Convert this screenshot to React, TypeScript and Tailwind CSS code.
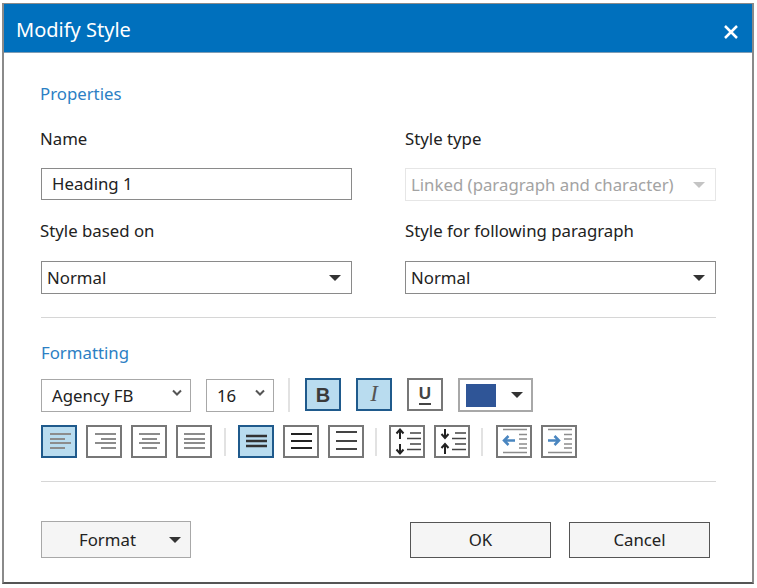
import type { ReactNode } from "react";

function Caret({ color = "#333" }: { color?: string }) {
  return (
    <svg width="14" height="8" viewBox="0 0 14 8" className="shrink-0">
      <path d="M1 1h12L7 7z" fill={color} />
    </svg>
  );
}

function Chevron() {
  return (
    <svg width="12" height="8" viewBox="0 0 12 8" className="shrink-0 -mt-[5px]">
      <path d="M2 1.5 6 5.5 10 1.5" fill="none" stroke="#555" strokeWidth="2" />
    </svg>
  );
}

function Select({ value }: { value: string }) {
  return (
    <div className="h-[33px] border border-[#8a8a8a] bg-white pl-[5px] pr-[9px] flex items-center justify-between text-[16.8px] text-[#222]">
      <span>{value}</span>
      <Caret />
    </div>
  );
}

function ToolButton({ active, children }: { active?: boolean; children: ReactNode }) {
  return (
    <button
      className={
        active
          ? "w-[36px] h-[33px] border-2 border-[#1f5a8c] bg-[#b9dcef] flex items-center justify-center"
          : "w-[36px] h-[33px] border-2 border-[#777777] bg-white flex items-center justify-center"
      }
    >
      {children}
    </button>
  );
}

function Lines({ lines, color = "#8c8c8c", width = 2 }: { lines: [number, number, number][]; color?: string; width?: number }) {
  return (
    <svg width="32" height="29" viewBox="0 0 32 29">
      {lines.map(([y, x1, x2]) => (
        <line key={y} x1={x1} x2={x2} y1={y} y2={y} stroke={color} strokeWidth={width} />
      ))}
    </svg>
  );
}

function Sep({ tall }: { tall?: boolean }) {
  return <div className={tall ? "w-[2px] h-[34px] bg-[#e2e2e2]" : "w-[2px] h-[28px] bg-[#e2e2e2]"} />;
}

function SpacingIcon({ flip }: { flip?: boolean }) {
  return (
    <svg width="32" height="29" viewBox="0 0 32 29">
      {flip ? (
        <path d="M9 2v8M5.5 7 9 11l3.5-4M9 27v-9M5.5 21 9 17l3.5 4" fill="none" stroke="#222" strokeWidth="2" />
      ) : (
        <path d="M9 12V3M5.5 6.5 9 2.500l3.500 4M9 17v9M5.500 22.500 9 26.500l3.500-4" fill="none" stroke="#222" strokeWidth="2" />
      )}
      <path d="M19 6h11M16 11.500h14M19 17h11M16 22.500h14" fill="none" stroke="#444" strokeWidth="1.500" />
    </svg>
  );
}

function IndentIcon({ right }: { right?: boolean }) {
  return (
    <svg width="32" height="29" viewBox="0 0 32 29">
      <path d="M5 2.500h24M5 25.500h24M21 7.500h8M21 12h8M21 17h8M21 21h8" fill="none" stroke="#8c8c8c" strokeWidth="1.500" />
      {right ? (
        <path d="M5 13.500h11M11.500 9l4.500 4.500-4.500 4.500" fill="none" stroke="#4a86c0" strokeWidth="2.500" />
      ) : (
        <path d="M17 13.500H6M10.500 9 6 13.500l4.500 4.500" fill="none" stroke="#4a86c0" strokeWidth="2.500" />
      )}
    </svg>
  );
}

export default function App() {
  return (
    <div className="w-[757px] h-[588px] bg-white pl-[2px] pt-[3px] font-['Noto_Sans',sans-serif]">
      <div className="w-[752px] h-[581px] border-x-2 border-t border-b-2 border-t-[#8a8a8a] border-x-[#8a8a8a] border-b-[#555555] bg-white flex flex-col">
        <div className="h-[49px] shrink-0 bg-[#0070bd] border-b border-[#7f9db5] pl-[12px] pr-[13px] flex items-center justify-between text-white">
          <span className="text-[20px] mt-[4px]">Modify Style</span>
          <svg width="16" height="16" viewBox="0 0 16 16" className="mt-[8px]">
            <path d="M2 2l12 12M14 2 2 14" stroke="#fff" strokeWidth="2.500" />
          </svg>
        </div>

        <div className="pl-[37px] pr-[36px] flex flex-col">
          <div className="mt-[29px] -ml-[1px] h-[24px] leading-[24px] text-[16.8px] text-[#2c7fc4]">Properties</div>

          <div className="grid grid-cols-[311px_311px] gap-x-[53px] mt-[21px] text-[16.8px] text-[#222]">
            <div className="h-[24px] leading-[24px] -ml-[1px]">Name</div>
            <div className="h-[24px] leading-[24px]">Style type</div>
            <div className="mt-[17px] h-[32px] border border-[#8a8a8a] pl-[10px] flex items-center">Heading 1</div>
            <div className="mt-[17px] h-[33px] border border-[#e6e6e6] pl-[5px] pr-[9px] flex items-center justify-between text-[#a3a3a3]">
              <span>Linked (paragraph and character)</span>
              <Caret color="#c4c4c4" />
            </div>
            <div className="mt-[18px] h-[24px] leading-[24px] -ml-[1px]">Style based on</div>
            <div className="mt-[18px] h-[24px] leading-[24px]">Style for following paragraph</div>
            <div className="mt-[18px]"><Select value="Normal" /></div>
            <div className="mt-[18px]"><Select value="Normal" /></div>
          </div>

          <div className="mt-[23px] w-[675px] h-[1px] bg-[#d6d6d6]" />

          <div className="mt-[23px] h-[24px] leading-[24px] text-[16.8px] text-[#2c7fc4]">Formatting</div>

          <div className="mt-[13px] flex items-center h-[34px]">
            <div className="w-[150px] h-[33px] border border-[#a8a8a8] pl-[10px] pr-[7px] pt-[1px] flex items-center justify-between text-[16.8px] text-[#222]">
              Agency FB
              <Chevron />
            </div>
            <div className="ml-[15px] w-[68px] h-[33px] border border-[#a8a8a8] pl-[10px] pr-[7px] pt-[1px] flex items-center justify-between text-[16.8px] text-[#222]">
              16
              <Chevron />
            </div>
            <div className="ml-[14px] mr-[15px]"><Sep tall /></div>
            <div className="flex gap-[15px]">
              <ToolButton active>
                <span className="font-['Liberation_Sans',sans-serif] font-bold text-[20px] text-[#3a3a3a]">B</span>
              </ToolButton>
              <ToolButton active>
                <span className="font-['Liberation_Serif',serif] italic text-[23px] text-[#555555]">I</span>
              </ToolButton>
              <ToolButton>
                <span className="font-['Liberation_Sans',sans-serif] font-bold text-[17px] leading-[18px] text-[#444] border-b-2 border-[#444]">U</span>
              </ToolButton>
              <div className="w-[75px] h-[34px] border-2 border-[#a8a8a8] pl-[6px] pr-[7px] flex items-center justify-between">
                <div className="w-[30px] h-[23px] bg-[#2f5597]" />
                <Caret />
              </div>
            </div>
          </div>

          <div className="mt-[13px] flex items-center h-[33px]">
            <div className="flex gap-[9px]">
              <ToolButton active><Lines lines={[[7, 7, 28], [12, 7, 22], [16, 7, 28], [21, 7, 22]]} /></ToolButton>
              <ToolButton><Lines lines={[[7, 7, 28], [12, 13, 28], [16, 7, 28], [21, 13, 28]]} /></ToolButton>
              <ToolButton><Lines lines={[[7, 6, 27], [12, 9, 24], [16, 6, 27], [21, 9, 24]]} /></ToolButton>
              <ToolButton><Lines lines={[[7, 6, 27], [12, 6, 27], [16, 6, 27], [21, 6, 27]]} /></ToolButton>
            </div>
            <div className="ml-[12px] mr-[12px]"><Sep /></div>
            <div className="flex gap-[9px]">
              <ToolButton active><Lines color="#333" width={2.500} lines={[[9, 6, 27], [14, 6, 27], [19, 6, 27]]} /></ToolButton>
              <ToolButton><Lines color="#222" lines={[[7, 6, 27], [14, 6, 27], [21, 6, 27]]} /></ToolButton>
              <ToolButton><Lines color="#444" lines={[[5, 6, 27], [14, 6, 27], [22, 6, 27]]} /></ToolButton>
            </div>
            <div className="ml-[11px] mr-[12px]"><Sep /></div>
            <div className="flex gap-[9px]">
              <ToolButton><SpacingIcon /></ToolButton>
              <ToolButton><SpacingIcon flip /></ToolButton>
            </div>
            <div className="ml-[11px] mr-[13px]"><Sep /></div>
            <div className="flex gap-[9px]">
              <ToolButton><IndentIcon /></ToolButton>
              <ToolButton><IndentIcon right /></ToolButton>
            </div>
          </div>

          <div className="mt-[23px] w-[675px] h-[1px] bg-[#d6d6d6]" />

          <div className="mt-[39px] flex items-start text-[16.8px] text-[#222]">
            <button className="w-[150px] h-[37px] bg-[#f5f5f5] border border-[#a8a8a8] pl-[37px] pr-[8px] flex items-center justify-between">
              Format
              <Caret />
            </button>
            <button className="ml-[219px] mt-[1px] w-[141px] h-[36px] bg-[#f5f5f5] border border-[#555555]">OK</button>
            <button className="ml-[18px] mt-[1px] w-[141px] h-[36px] bg-[#f5f5f5] border border-[#555555]">Cancel</button>
          </div>
        </div>
      </div>
    </div>
  );
}
